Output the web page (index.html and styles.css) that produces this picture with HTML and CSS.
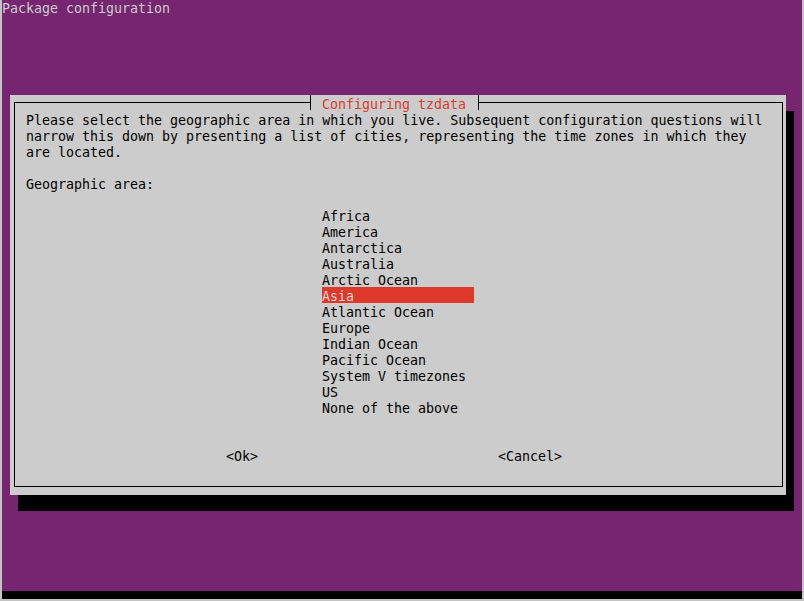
FILE: index.html
```html
<!DOCTYPE html>
<html lang="en">
<head>
    <meta charset="UTF-8">
    <meta name="viewport" content="width=device-width, initial-scale=1.0">
    <title>Package configuration</title>
    <link rel="stylesheet" href="styles.css">
</head>
<body>
    <div class="screen">
        <div class="term">
            <div class="row root-title">Package configuration</div>

            <div class="dialog">
                <div class="frame">
                    <div class="caption">Configuring tzdata</div>

                    <div class="row">Please select the geographic area in which you live. Subsequent configuration questions will</div>
                    <div class="row">narrow this down by presenting a list of cities, representing the time zones in which they</div>
                    <div class="row">are located.</div>

                    <div class="row prompt">Geographic area:</div>

                    <div class="list">
                        <div class="row">Africa</div>
                        <div class="row">America</div>
                        <div class="row">Antarctica</div>
                        <div class="row">Australia</div>
                        <div class="row">Arctic Ocean</div>
                        <div class="row selected">Asia</div>
                        <div class="row">Atlantic Ocean</div>
                        <div class="row">Europe</div>
                        <div class="row">Indian Ocean</div>
                        <div class="row">Pacific Ocean</div>
                        <div class="row">System V timezones</div>
                        <div class="row">US</div>
                        <div class="row">None of the above</div>
                    </div>

                    <div class="buttons">
                        <div class="row btn-ok">&lt;Ok&gt;</div>
                        <div class="row btn-cancel">&lt;Cancel&gt;</div>
                    </div>
                </div>
            </div>
        </div>
        <div class="strip"></div>
    </div>
</body>
</html>
```

FILE: styles.css
```css
body {
    margin: 0;
    background-color: #c4c4c4;
}

/* outer window: thin grey frame on the sides and bottom */
.screen {
    display: flex;
    flex-direction: column;
    width: 800px;
    border-left: 2px solid #c4c4c4;
    border-right: 2px solid #c4c4c4;
    border-bottom: 2px solid #c4c4c4;
}

/* 100 x 37 character cells, 8 x 16 px each */
.term {
    height: 592px;
    margin-top: -1px;
    background-color: #762671;
    color: #cccccc;
    font-family: "DejaVu Sans Mono", "Liberation Mono", monospace;
    font-size: 13.3px;
}
.strip {
    height: 8px;
    background-color: #000;
}

.row {
    box-sizing: border-box;
    height: 16px;
    padding-top: 3px;
    line-height: 13px;
    white-space: pre;
}

/* dialog window, rows 6-30, cols 1-97 */
.dialog {
    box-sizing: border-box;
    width: 776px;
    height: 400px;
    margin: 80px 0 0 8px;
    padding: 7px 3px 8px 4px;
    background-color: #cccccc;
    color: #000;
    box-shadow: 8px 16px 0 #000;
}
.frame {
    position: relative;
    box-sizing: border-box;
    height: 385px;
    padding: 8px 0 0 11px;
    border: 1px solid #000;
}

/* title sits on the top border between the two tees */
.caption {
    position: absolute;
    top: -8px;
    left: 295px;
    box-sizing: border-box;
    width: 169px;
    height: 15px;
    padding: 3px 0 0 11px;
    line-height: 13px;
    border-left: 1px solid #000;
    border-right: 1px solid #000;
    background-color: #cccccc;
    color: #de382b;
    white-space: pre;
}

.prompt {
    margin-top: 16px;
}

.list {
    width: 152px;
    margin: 16px 0 0 296px;
}
.selected {
    background-color: #de382b;
    color: #d6d6d6;
}

.buttons {
    display: flex;
    margin-top: 32px;
}
.btn-ok {
    margin-left: 200px;
}
.btn-cancel {
    margin-left: 240px;
}
```
